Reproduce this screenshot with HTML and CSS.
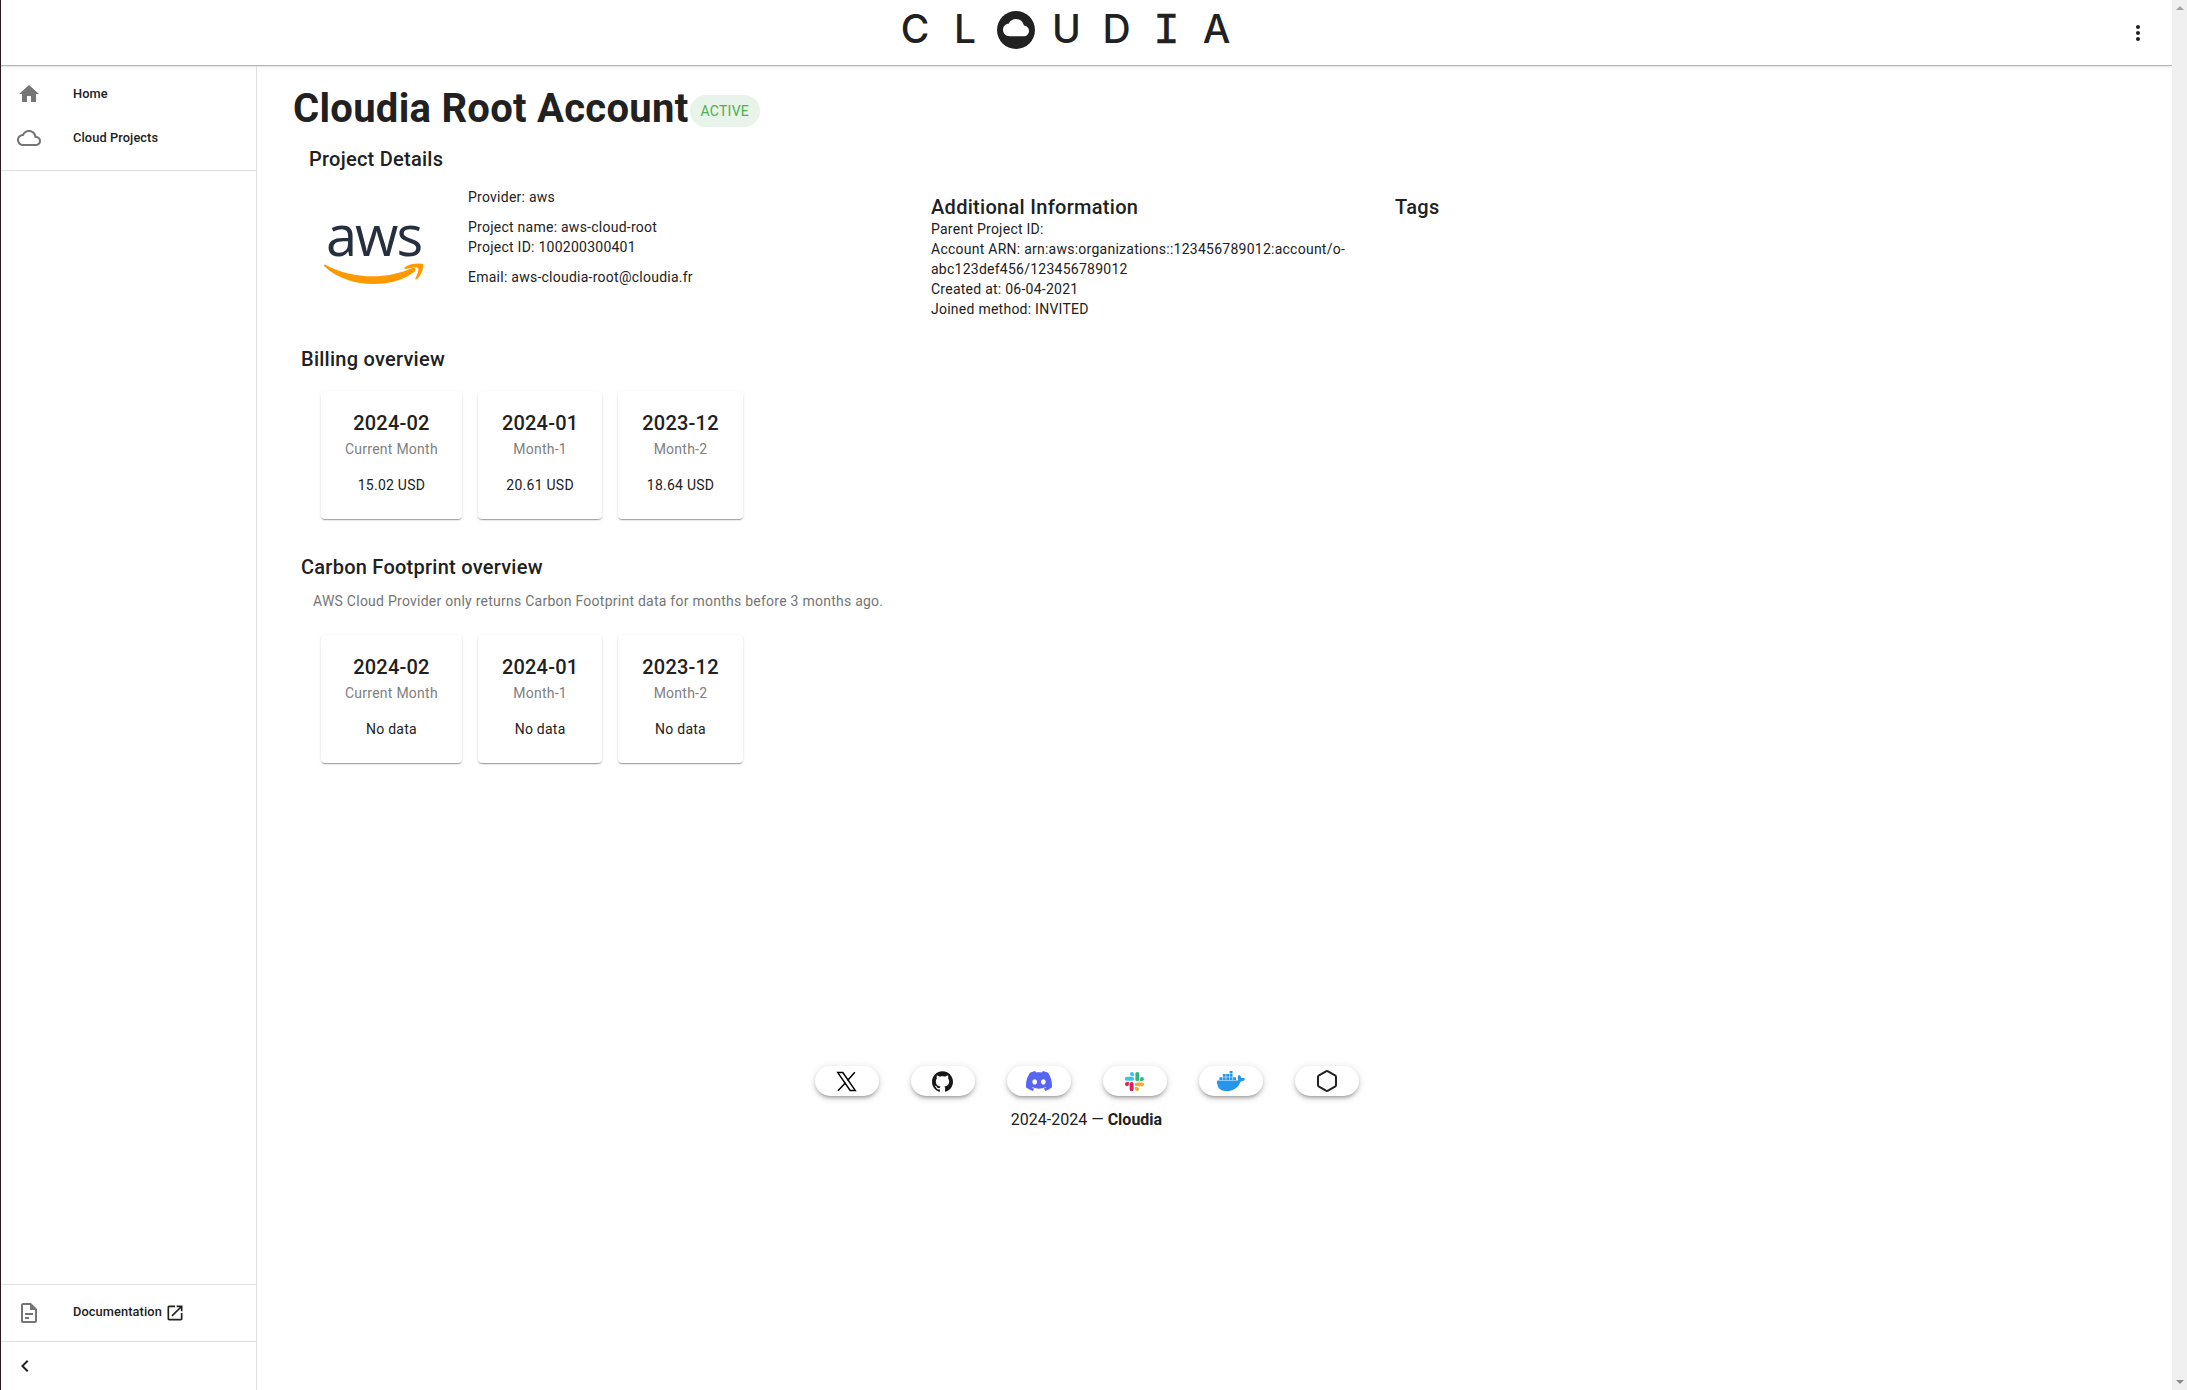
FILE: index.html
```html
<!DOCTYPE html>
<html lang="en">
  <head>
    <meta charset="UTF-8" />
    <title>Cloudia</title>
    <link rel="stylesheet" href="styles.css">
  </head>
  <body>
    <div class="app">
      <header class="topbar">
        <div class="logo">
          <span class="logo-letter">C</span>
          <span class="logo-letter">L</span>
          <svg class="logo-mark" viewBox="0 0 38 38">
            <circle cx="19" cy="19" r="19" fill="#212121" />
            <path transform="translate(6 3.7) scale(1.083)" fill="#fff" d="M19.35 10.04C18.67 6.59 15.64 4 12 4 9.11 4 6.6 5.64 5.35 8.04 2.34 8.36 0 10.91 0 14c0 3.31 2.69 6 6 6h13c2.76 0 5-2.24 5-5 0-2.64-2.05-4.78-4.65-4.96z" />
          </svg>
          <span class="logo-letter">U</span>
          <span class="logo-letter">D</span>
          <span class="logo-letter logo-letter-slab">I</span>
          <span class="logo-letter">A</span>
        </div>
        <svg class="topbar-menu" viewBox="0 0 24 24"><path d="M12 8c1.1 0 2-.9 2-2s-.9-2-2-2-2 .9-2 2 .9 2 2 2zm0 2c-1.1 0-2 .9-2 2s.9 2 2 2 2-.9 2-2-.9-2-2-2zm0 6c-1.1 0-2 .9-2 2s.9 2 2 2 2-.9 2-2-.9-2-2-2z" /></svg>
      </header>

      <div class="layout">
        <aside class="sidebar">
          <nav class="nav-list">
            <a class="nav-item">
              <svg class="nav-icon" viewBox="0 0 24 24"><path d="M10 20v-6h4v6h5v-8h3L12 3 2 12h3v8z" /></svg>
              <span>Home</span>
            </a>
            <a class="nav-item">
              <svg class="nav-icon" viewBox="0 0 24 24"><path d="M19.35 10.04C18.67 6.59 15.64 4 12 4 9.11 4 6.6 5.64 5.35 8.04 2.34 8.36 0 10.91 0 14c0 3.31 2.69 6 6 6h13c2.76 0 5-2.24 5-5 0-2.64-2.05-4.78-4.65-4.96zM19 18H6c-2.21 0-4-1.79-4-4 0-2.05 1.53-3.76 3.56-3.97l1.07-.11.5-.95C8.08 7.14 9.94 6 12 6c2.62 0 4.88 1.86 5.39 4.43l.3 1.5 1.53.11c1.56.1 2.78 1.41 2.78 2.96 0 1.65-1.35 3-3 3z" /></svg>
              <span>Cloud Projects</span>
            </a>
          </nav>
          <div class="sidebar-bottom">
            <a class="nav-item doc-item">
              <svg class="nav-icon" viewBox="0 0 24 24"><path d="M8 16h4v2H8zm0-4h8v2H8zm6-10H6c-1.1 0-2 .9-2 2v16c0 1.1.89 2 1.99 2H18c1.1 0 2-.9 2-2V8l-6-6zm4 18H6V4h7v5h5v11z" /></svg>
              <span class="doc-label">Documentation</span>
              <svg class="external-icon" viewBox="0 0 24 24"><path d="M19 19H5V5h7V3H5c-1.11 0-2 .9-2 2v14c0 1.1.89 2 2 2h14c1.1 0 2-.9 2-2v-7h-2v7zM14 3v2h3.59l-9.83 9.83 1.41 1.41L19 6.41V10h2V3h-7z" /></svg>
            </a>
            <div class="collapse-row">
              <svg class="collapse-icon" viewBox="0 0 24 24"><path d="M15.41 7.41 14 6l-6 6 6 6 1.41-1.41L10.83 12z" /></svg>
            </div>
          </div>
        </aside>

        <main class="content">
          <div class="title-row">
            <h1>Cloudia Root Account</h1>
            <span class="chip">ACTIVE</span>
          </div>

          <h2 class="section-title details-title">Project Details</h2>
          <div class="details">
            <div class="aws-logo">
              <span class="aws-word">aws</span>
              <svg class="aws-smile" viewBox="0 0 100 22">
                <path d="M0 2C1 1 1.500 1.500 2 2 28 16 62 17 88 5 91 4 93 7 90 9 72 24 26 28 0 3Z" />
                <path d="M81 4C86 0 96 0 99 1 100 5 97 13 93 16 91 17 91 16 92 14 94 10 95 6 94 5 92 4 86 5 82 6 80 6 80 5 81 4Z" />
              </svg>
            </div>
            <div class="details-main">
              <p class="spaced">Provider: aws</p>
              <p>Project name: aws-cloud-root</p>
              <p class="spaced">Project ID: 100200300401</p>
              <p>Email: aws-cloudia-root@cloudia.fr</p>
            </div>
            <div class="details-extra">
              <h3>Additional Information</h3>
              <p>Parent Project ID:</p>
              <p>Account ARN: arn:aws:organizations::123456789012:account/o-abc123def456/123456789012</p>
              <p>Created at: 06-04-2021</p>
              <p>Joined method: INVITED</p>
            </div>
            <div class="details-tags">
              <h3>Tags</h3>
            </div>
          </div>

          <h2 class="section-title billing-title">Billing overview</h2>
          <div class="cards">
            <div class="card">
              <div class="card-date">2024-02</div>
              <div class="card-label">Current Month</div>
              <div class="card-value">15.02 USD</div>
            </div>
            <div class="card">
              <div class="card-date">2024-01</div>
              <div class="card-label">Month-1</div>
              <div class="card-value">20.61 USD</div>
            </div>
            <div class="card">
              <div class="card-date">2023-12</div>
              <div class="card-label">Month-2</div>
              <div class="card-value">18.64 USD</div>
            </div>
          </div>

          <h2 class="section-title carbon-title">Carbon Footprint overview</h2>
          <p class="note">AWS Cloud Provider only returns Carbon Footprint data for months before 3 months ago.</p>
          <div class="cards">
            <div class="card">
              <div class="card-date">2024-02</div>
              <div class="card-label">Current Month</div>
              <div class="card-value">No data</div>
            </div>
            <div class="card">
              <div class="card-date">2024-01</div>
              <div class="card-label">Month-1</div>
              <div class="card-value">No data</div>
            </div>
            <div class="card">
              <div class="card-date">2023-12</div>
              <div class="card-label">Month-2</div>
              <div class="card-value">No data</div>
            </div>
          </div>

          <footer class="footer">
            <div class="socials">
              <a class="social">
                <svg class="social-icon" viewBox="0 0 24 24" fill="none" stroke="#000" stroke-width="1.700"><path d="M2 1.800h5.800l14.200 20.400h-5.800z" /><path d="M21.500 1.500 13.200 10.900M10.900 13.500 2.300 22.500" /></svg>
              </a>
              <a class="social">
                <svg class="social-icon" viewBox="0 0 24 24"><path fill="#181717" d="M12 .297c-6.63 0-12 5.373-12 12 0 5.303 3.438 9.8 8.205 11.385.6.113.82-.258.82-.577 0-.285-.01-1.04-.015-2.04-3.338.724-4.042-1.61-4.042-1.61C4.422 18.07 3.633 17.7 3.633 17.7c-1.087-.744.084-.729.084-.729 1.205.084 1.838 1.236 1.838 1.236 1.07 1.835 2.809 1.305 3.495.998.108-.776.417-1.305.76-1.605-2.665-.3-5.466-1.332-5.466-5.93 0-1.31.465-2.38 1.235-3.22-.135-.303-.54-1.523.105-3.176 0 0 1.005-.322 3.3 1.23.96-.267 1.98-.399 3-.405 1.02.006 2.04.138 3 .405 2.28-1.552 3.285-1.23 3.285-1.23.645 1.653.24 2.873.12 3.176.765.84 1.23 1.91 1.23 3.22 0 4.61-2.805 5.625-5.475 5.92.42.36.81 1.096.81 2.22 0 1.606-.015 2.896-.015 3.286 0 .315.21.69.825.57C20.565 22.092 24 17.592 24 12.297c0-6.627-5.373-12-12-12" /></svg>
              </a>
              <a class="social">
                <svg class="social-icon social-icon-wide" viewBox="0 0 24 24"><path fill="#5865f2" d="M20.317 4.3698a19.7913 19.7913 0 00-4.8851-1.5152.0741.0741 0 00-.0785.0371c-.211.3753-.4447.8648-.6083 1.2495-1.8447-.2762-3.68-.2762-5.4868 0-.1636-.3933-.4058-.8742-.6177-1.2495a.077.077 0 00-.0785-.037 19.7363 19.7363 0 00-4.8852 1.515.0699.0699 0 00-.0321.0277C.5334 9.0458-.319 13.5799.0992 18.0578a.0824.0824 0 00.0312.0561c2.0528 1.5076 4.0413 2.4228 5.9929 3.0294a.0777.0777 0 00.0842-.0276c.4616-.6304.8731-1.2952 1.226-1.9942a.076.076 0 00-.0416-.1057c-.6528-.2476-1.2743-.5495-1.8722-.8923a.077.077 0 01-.0076-.1277c.1258-.0943.2517-.1923.3718-.2914a.0743.0743 0 01.0776-.0105c3.9278 1.7933 8.18 1.7933 12.0614 0a.0739.0739 0 01.0785.0095c.1202.099.246.1981.3728.2924a.077.077 0 01-.0066.1276 12.2986 12.2986 0 01-1.873.8914.0766.0766 0 00-.0407.1067c.3604.698.7719 1.3628 1.225 1.9932a.076.076 0 00.0842.0286c1.961-.6067 3.9495-1.5219 6.0023-3.0294a.077.077 0 00.0313-.0552c.5004-5.177-.8382-9.6739-3.5485-13.6604a.061.061 0 00-.0312-.0286zM8.02 15.3312c-1.1825 0-2.1569-1.0857-2.1569-2.419 0-1.3332.9555-2.4189 2.157-2.4189 1.2108 0 2.1757 1.0952 2.1568 2.419 0 1.3332-.9555 2.4189-2.1569 2.4189zm7.9748 0c-1.1825 0-2.1569-1.0857-2.1569-2.419 0-1.3332.9554-2.4189 2.1569-2.4189 1.2108 0 2.1757 1.0952 2.1568 2.419 0 1.3332-.946 2.4189-2.1568 2.4189Z" /></svg>
              </a>
              <a class="social">
                <svg class="social-icon" viewBox="0 0 24 24">
                  <g fill="#36c5f0"><rect x="1" y="6.500" width="10.500" height="4.500" rx="2.200" /><path d="M9 1.200a2.300 2.300 0 0 1 2.400 2.300v2.100H9a2.200 2.200 0 0 1 0-4.400z" /></g>
                  <g fill="#2eb67d"><rect x="13" y="1" width="4.500" height="10.500" rx="2.200" /><path d="M22.800 9a2.300 2.300 0 0 1-2.300 2.400h-2.100V9a2.200 2.200 0 0 1 4.400 0z" /></g>
                  <g fill="#ecb22e"><rect x="12.500" y="13" width="10.500" height="4.500" rx="2.200" /><path d="M15 22.800a2.300 2.300 0 0 1-2.400-2.300v-2.100H15a2.200 2.200 0 0 1 0 4.400z" /></g>
                  <g fill="#e01e5a"><rect x="6.500" y="12.500" width="4.500" height="10.500" rx="2.200" /><path d="M1.200 15a2.300 2.300 0 0 1 2.300-2.400h2.100V15a2.200 2.200 0 0 1-4.400 0z" /></g>
                </svg>
              </a>
              <a class="social">
                <svg class="social-icon social-icon-docker" viewBox="0 0 24 24"><path fill="#2496ed" d="M13.983 11.078h2.119a.186.186 0 00.186-.185V9.006a.186.186 0 00-.186-.186h-2.119a.185.185 0 00-.185.185v1.888c0 .102.083.185.185.185m-2.954-5.43h2.118a.186.186 0 00.186-.186V3.574a.186.186 0 00-.186-.185h-2.118a.185.185 0 00-.185.185v1.888c0 .102.082.185.185.186m0 2.716h2.118a.187.187 0 00.186-.186V6.29a.186.186 0 00-.186-.185h-2.118a.185.185 0 00-.185.185v1.887c0 .102.082.185.185.186m-2.93 0h2.12a.186.186 0 00.184-.186V6.29a.185.185 0 00-.185-.185H8.1a.185.185 0 00-.185.185v1.887c0 .102.083.185.185.186m-2.964 0h2.119a.186.186 0 00.185-.186V6.29a.185.185 0 00-.185-.185H5.136a.186.186 0 00-.186.185v1.887c0 .102.084.185.186.186m5.893 2.715h2.118a.186.186 0 00.186-.185V9.006a.186.186 0 00-.186-.186h-2.118a.185.185 0 00-.185.185v1.888c0 .102.082.185.185.185m-2.93 0h2.12a.185.185 0 00.184-.185V9.006a.185.185 0 00-.184-.186h-2.12a.185.185 0 00-.184.185v1.888c0 .102.083.185.185.185m-2.964 0h2.119a.185.185 0 00.185-.185V9.006a.185.185 0 00-.184-.186h-2.12a.186.186 0 00-.186.186v1.887c0 .102.084.185.186.185m-2.92 0h2.12a.185.185 0 00.184-.185V9.006a.185.185 0 00-.184-.186h-2.12a.185.185 0 00-.184.185v1.888c0 .102.082.185.185.185M23.763 9.89c-.065-.051-.672-.51-1.954-.51-.338.001-.676.03-1.01.087-.248-1.7-1.653-2.53-1.716-2.566l-.344-.199-.226.327c-.284.438-.49.922-.612 1.43-.23.97-.09 1.882.403 2.661-.595.332-1.55.413-1.744.42H.751a.751.751 0 00-.75.748 11.376 11.376 0 00.692 4.062c.545 1.428 1.355 2.48 2.41 3.124 1.18.723 3.1 1.137 5.275 1.137.983.003 1.963-.086 2.93-.266a12.248 12.248 0 003.823-1.389c.98-.567 1.86-1.288 2.61-2.136 1.252-1.418 1.998-2.997 2.553-4.4h.221c1.372 0 2.215-.549 2.68-1.009.309-.293.55-.65.707-1.046l.098-.288Z" /></svg>
              </a>
              <a class="social">
                <svg class="social-icon-hex" viewBox="0 0 24 24"><path fill="none" stroke="#212121" stroke-width="2" stroke-linecap="round" stroke-linejoin="round" d="M21 16V8a2 2 0 0 0-1-1.730l-7-4a2 2 0 0 0-2 0l-7 4A2 2 0 0 0 3 8v8a2 2 0 0 0 1 1.730l7 4a2 2 0 0 0 2 0l7-4A2 2 0 0 0 21 16z" /></svg>
              </a>
            </div>
            <p class="copyright">2024-2024 — <strong>Cloudia</strong></p>
          </footer>
        </main>
      </div>
    </div>

    <div class="scrollbar">
      <span class="scroll-up"></span>
      <span class="scroll-down"></span>
    </div>
  </body>
</html>
```

FILE: styles.css
```css
* {
  margin: 0;
  padding: 0;
  box-sizing: border-box;
}

html,
body {
  height: 1390px;
  overflow: hidden;
}

body {
  display: flex;
  font-family: Roboto, "Liberation Sans", sans-serif;
  font-size: 14px;
  line-height: 20px;
  letter-spacing: 0.25px;
  color: #212121;
  background-color: #fff;
  border-left: 1px solid #2a1a20;
}

.app {
  flex: 1;
  min-width: 0;
  display: flex;
  flex-direction: column;
}

/* top bar */
.topbar {
  flex: none;
  height: 66px;
  display: flex;
  align-items: center;
  border-bottom: 1px solid #b4b4b4;
  box-shadow: 0 1px 2px rgba(0, 0, 0, 0.12);
  padding-right: 22px;
}

.logo {
  display: flex;
  align-items: baseline;
  margin-left: 889px;
  margin-bottom: 5px;
}

.logo-letter {
  width: 50px;
  text-align: center;
  font-family: Inter, sans-serif;
  font-size: 39px;
  line-height: 40px;
  font-weight: 500;
  letter-spacing: 0;
}

.logo-letter-slab {
  font-family: "Liberation Mono", monospace;
  font-size: 44px;
  font-weight: 400;
  -webkit-text-stroke: 0.5px #212121;
}

.logo-mark {
  align-self: center;
  width: 38px;
  height: 38px;
  margin-left: 7px;
  margin-right: 6.5px;
}

.topbar-menu {
  width: 24px;
  height: 24px;
  margin-left: auto;
  margin-top: 1px;
  fill: #212121;
}

/* sidebar */
.layout {
  flex: 1;
  min-height: 0;
  display: flex;
}

.sidebar {
  flex: none;
  width: 256px;
  display: flex;
  flex-direction: column;
  justify-content: space-between;
  border-right: 1px solid #e0e0e0;
}

.nav-list {
  padding: 6px 0 10px;
  border-bottom: 1px solid #e0e0e0;
}

.nav-item {
  display: flex;
  align-items: center;
  height: 44px;
  padding-left: 16px;
  font-size: 12.8px;
  font-weight: 500;
  letter-spacing: 0.1px;
}

.nav-icon {
  flex: none;
  width: 24px;
  height: 24px;
  margin-right: 32px;
  fill: #757575;
}

.doc-item {
  height: 58px;
  border-top: 1px solid #e0e0e0;
  border-bottom: 1px solid #e0e0e0;
}

.doc-label {
  margin-bottom: 2px;
}

.external-icon {
  width: 20px;
  height: 20px;
  margin-left: 3px;
  fill: #212121;
}

.collapse-row {
  height: 48px;
  padding-left: 12px;
  display: flex;
  align-items: center;
}

.collapse-icon {
  width: 24px;
  height: 24px;
  fill: #212121;
}

/* main content */
.content {
  flex: 1;
  min-width: 0;
  padding: 0 0 0 36px;
}

.title-row {
  display: flex;
  align-items: center;
  padding-top: 19px;
}

h1 {
  font-size: 40px;
  line-height: 48px;
  font-weight: 700;
  letter-spacing: 0.28px;
}

.chip {
  height: 32px;
  margin-top: 4px;
  margin-left: 1px;
  padding: 0 11px;
  border-radius: 16px;
  line-height: 32px;
  font-size: 14px;
  color: #4caf50;
  background-color: #e8f3e9;
}

.section-title {
  font-size: 20px;
  line-height: 32px;
  font-weight: 500;
  margin-left: 8px;
}

.details-title {
  margin-left: 16px;
  margin-top: 10px;
}

.details {
  display: flex;
  align-items: flex-start;
  margin-left: 16px;
  margin-top: 12px;
}

.aws-logo {
  flex: none;
  width: 159px;
  padding-top: 15px;
  display: flex;
  flex-direction: column;
  align-items: flex-start;
}

.aws-word {
  margin-left: 17px;
  font-family: "Open Sans", sans-serif;
  font-size: 56px;
  line-height: 64px;
  font-weight: 500;
  letter-spacing: -2px;
  color: #252f3e;
}

.aws-smile {
  width: 100px;
  height: 22px;
  margin-left: 15px;
  margin-top: -3px;
  fill: #f90;
}

.details-main {
  flex: none;
  width: 463px;
}

.spaced {
  margin-bottom: 10px;
}

.details-extra {
  flex: none;
  width: 464px;
  padding-top: 8px;
  padding-right: 34px;
}

.details-tags {
  padding-top: 8px;
}

.details-extra h3,
.details-tags h3 {
  font-size: 20px;
  line-height: 24px;
  font-weight: 500;
  letter-spacing: 0.3px;
}

.billing-title {
  margin-top: 24px;
}

.cards {
  display: flex;
  gap: 16px;
  margin-left: 28px;
  margin-top: 16px;
}

.card {
  height: 128px;
  padding: 16px 24px 24px;
  text-align: center;
  border-radius: 4px;
  background-color: #fff;
  box-shadow: 0 2px 1px -1px rgba(0, 0, 0, 0.2), 0 1px 1px 0 rgba(0, 0, 0, 0.14), 0 1px 3px 0 rgba(0, 0, 0, 0.12);
}

.card-date {
  font-size: 20px;
  line-height: 32px;
  font-weight: 500;
  letter-spacing: 0.2px;
}

.card-label {
  color: #808080;
}

.card-value {
  margin-top: 16px;
}

.carbon-title {
  margin-top: 32px;
}

.note {
  margin-left: 20px;
  margin-top: 8px;
  margin-bottom: 24px;
  color: #757575;
}

.note + .cards {
  margin-top: 0;
}

/* footer */
.footer {
  margin-top: 303px;
  margin-right: 256px;
  margin-left: -36px;
  text-align: center;
}

.socials {
  display: flex;
  justify-content: center;
  gap: 32px;
}

.social {
  width: 64px;
  height: 30px;
  display: flex;
  align-items: center;
  justify-content: center;
  border-radius: 15px;
  background-color: #fff;
  box-shadow: 0 3px 3px -2px rgba(0, 0, 0, 0.25), 0 3px 4px 0 rgba(0, 0, 0, 0.14), 0 1px 8px 0 rgba(0, 0, 0, 0.12);
}

.social-icon {
  width: 21px;
  height: 21px;
}

.social-icon-wide {
  width: 26px;
  height: 26px;
}

.social-icon-docker {
  width: 28px;
  height: 28px;
}

.social-icon-hex {
  width: 24px;
  height: 24px;
}

.copyright {
  margin-top: 14px;
  font-size: 16px;
  line-height: 20px;
  letter-spacing: 0;
}

/* window scrollbar */
.scrollbar {
  flex: none;
  width: 15px;
  display: flex;
  flex-direction: column;
  justify-content: space-between;
  align-items: center;
  padding: 6px 0;
  background-color: #f0f0f0;
}

.scroll-up {
  border-left: 4px solid transparent;
  border-right: 4px solid transparent;
  border-bottom: 4px solid #a3a3a3;
}

.scroll-down {
  border-left: 4px solid transparent;
  border-right: 4px solid transparent;
  border-top: 4px solid #8a8a8a;
}
```
